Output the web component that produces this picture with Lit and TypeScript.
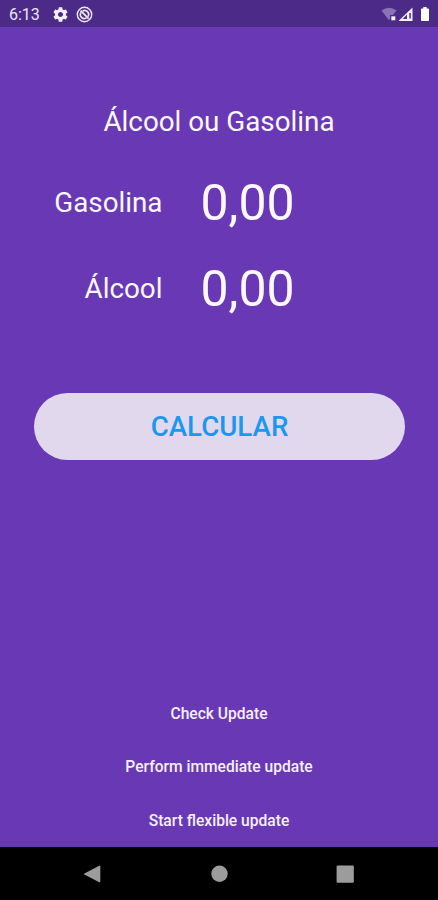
import { LitElement, html, css } from "lit";
import { customElement } from "lit/decorators.js";

@customElement("status-bar")
class StatusBar extends LitElement {
  static styles = css`
    :host {
      display: flex;
      align-items: center;
      height: 27px;
      padding: 0 7px 0 9px;
      box-sizing: border-box;
      background: #4b2b87;
      color: #ece6f5;
      font: 400 16px/27px Roboto, sans-serif;
    }
    .time { padding-top: 2px; width: 44px; }
    svg { display: block; flex: none; }
    .gear { margin-top: 1px; }
    .sync { margin: 1px 0 0 8px; }
    .signals { margin: 2px 0 0 auto; }
  `;
  render() {
    return html`
      <span class="time">6:13</span>
      <svg class="gear" width="15" height="15" viewBox="1.6 1.6 20.8 20.8">
        <path fill="#f4f0fa" d="M19.43 12.98c.04-.32.07-.64.07-.98s-.03-.66-.07-.98l2.11-1.65c.19-.15.24-.42.12-.64l-2-3.46c-.12-.22-.39-.3-.61-.22l-2.49 1c-.52-.4-1.08-.73-1.69-.98l-.38-2.65C14.46 2.18 14.25 2 14 2h-4c-.25 0-.46.18-.49.42l-.38 2.65c-.61.25-1.17.59-1.69.98l-2.49-1c-.23-.09-.49 0-.61.22l-2 3.46c-.13.22-.07.49.12.64l2.11 1.65c-.04.32-.07.65-.07.98s.03.66.07.98l-2.11 1.65c-.19.15-.24.42-.12.64l2 3.46c.12.22.39.3.61.22l2.49-1c.52.4 1.08.73 1.69.98l.38 2.65c.03.24.24.42.49.42h4c.25 0 .46-.18.49-.42l.38-2.65c.61-.25 1.17-.59 1.69-.98l2.49 1c.23.09.49 0 .61-.22l2-3.46c.12-.22.07-.49-.12-.64l-2.11-1.65zM12 15.5c-1.93 0-3.5-1.57-3.5-3.5s1.57-3.5 3.5-3.5 3.5 1.57 3.5 3.5-1.57 3.5-3.5 3.5z"/>
      </svg>
      <svg class="sync" width="17" height="17" viewBox="0 0 17 17" fill="none" stroke="#ece6f5">
        <circle cx="8.5" cy="8.5" r="7.2" stroke-width="1.4"/>
        <path stroke-width="1.6" d="M6.6 5a4 4 0 0 1 5.400 5.600M10.400 12a4 4 0 0 1-5.400-5.600"/>
        <path stroke-width="1.8" d="M4.600 4.600l8 8"/>
      </svg>
      <svg class="signals" width="50" height="17" viewBox="0 0 50 17">
        <path fill="#8a72b6" d="M.5 4.500Q8 -1 15.500 4.500L12 9H9v3.500L8 14.200Z"/>
        <path fill="#f4f0fa" d="M10.300 10.300h4v4h-4z"/>
        <path fill="#f4f0fa" d="M31.500 1.500V15H17.500Z"/>
        <path fill="#4b2b87" d="M26 8.500V13h-4.300zM28.300 7h1.500v5.500h-1.500z"/>
        <path fill="#fff" d="M42.300 1h3.400v1.500h1.500q.8 0 .8.8v11q0 .8-.8.800h-6.400q-.8 0-.8-.8v-11q0-.8.8-.8h1.500z"/>
      </svg>
    `;
  }
}

@customElement("nav-bar")
class NavBar extends LitElement {
  static styles = css`
    :host {
      display: flex;
      justify-content: space-between;
      align-items: center;
      box-sizing: border-box;
      height: 53px;
      padding: 0 84px 0 83px;
      background: #000;
    }
    svg { display: block; fill: #9c9c9c; }
  `;
  render() {
    return html`
      <svg width="18" height="18"><path d="M16.200.800Q17.300.300 17.300 1.300V16.700Q17.300 17.700 16.200 17.200L1.400 9.600Q.400 9 1.400 8.400Z"/></svg>
      <svg width="18" height="18"><circle cx="9.500" cy="8.800" r="8.200"/></svg>
      <svg width="18" height="18"><rect x=".600" y=".500" width="17.200" height="17.200" rx="1"/></svg>
    `;
  }
}

@customElement("app-root")
class AppRoot extends LitElement {
  static styles = css`
    :host {
      display: flex;
      flex-direction: column;
      height: 900px;
      background: #6939b5;
      color: #fbf8ff;
      font-family: Roboto, sans-serif;
    }
    main {
      flex: 1;
      display: flex;
      flex-direction: column;
    }
    h1 {
      margin: 78px 0 0;
      text-align: center;
      font: 400 27.8px/33px Roboto, sans-serif;
    }
    .prices {
      display: grid;
      grid-template-columns: 162.5px 1fr;
      grid-auto-rows: 86px;
      column-gap: 38px;
      align-items: center;
      margin-top: 22px;
    }
    .label { text-align: right; font-size: 27.8px; line-height: 34px; }
    .value { font-size: 50px; line-height: 60px; }
    .calc {
      margin: 61px 33px 0 34px;
      height: 67px;
      padding: 0;
      border: 0;
      border-radius: 34px;
      background: #e1d8ee;
      color: #1c97ee;
      font: 500 27.7px/67px Roboto, sans-serif;
    }
    .actions {
      margin-top: auto;
      display: flex;
      flex-direction: column;
      align-items: center;
    }
    .action {
      height: 53.5px;
      padding: 2px 0 0;
      border: 0;
      background: none;
      color: #f5effc;
      font: 500 15.6px/51px Roboto, sans-serif;
    }
  `;
  render() {
    return html`
      <status-bar></status-bar>
      <main>
        <h1>Álcool ou Gasolina</h1>
        <section class="prices">
          ${["Gasolina", "Álcool"].map(
            (name) => html`<span class="label">${name}</span><span class="value">0,00</span>`
          )}
        </section>
        <button class="calc">CALCULAR</button>
        <div class="actions">
          ${["Check Update", "Perform immediate update", "Start flexible update"].map(
            (label) => html`<button class="action">${label}</button>`
          )}
        </div>
      </main>
      <nav-bar></nav-bar>
    `;
  }
}
